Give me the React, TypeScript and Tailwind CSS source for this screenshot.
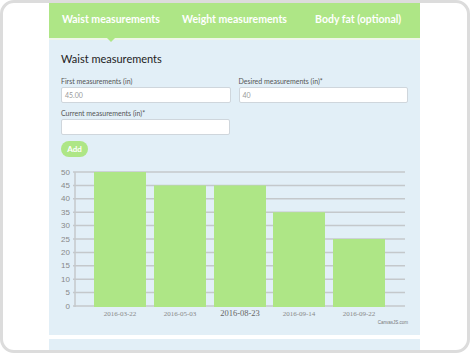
import React from "react";

const tabs = ["Waist measurements", "Weight measurements", "Body fat (optional)"];

const bars = [
  { label: "2016-03-22", value: 50 },
  { label: "2016-05-03", value: 45 },
  { label: "2016-08-23", value: 45, big: true },
  { label: "2016-09-14", value: 35 },
  { label: "2016-09-22", value: 25 },
];

function Field({ label, value }: { label: string; value?: string }) {
  return (
    <div className="flex flex-col">
      <span className="text-[7px] leading-[10px] text-[#555] mb-[1px]">{label}</span>
      <div className="h-[16px] bg-white border border-[#cfd6dc] rounded-[2px] flex items-center px-[3px] text-[7px] text-[#999]">
        {value}
      </div>
    </div>
  );
}

function Chart() {
  const top = 9;
  const bottom = 143;
  const step = (bottom - top) / 10;
  const xs = [45, 105, 165, 224, 284];
  return (
    <svg width="371" height="170" className="block">
      {Array.from({ length: 11 }).map((_, i) => {
        const y = top + i * step;
        return (
          <g key={i}>
            <line x1="24" x2="356" y1={y} y2={y} stroke="#c4c8cb" strokeWidth="1.5" />
            <text
              x="21"
              y={y + 2.5}
              textAnchor="end"
              fontSize="8"
              fill="#888"
              fontFamily="'Liberation Sans', sans-serif"
            >
              {50 - i * 5}
            </text>
          </g>
        );
      })}
      <line x1="26" x2="26" y1={top} y2={bottom + 1} stroke="#c4c8cb" strokeWidth="1.5" />
      {bars.map((b, i) => {
        const y = bottom - (b.value / 50) * (bottom - top);
        return (
          <g key={b.label}>
            <rect x={xs[i]} y={y} width="52" height={bottom - y + 1} fill="#aee686" />
            <text
              x={xs[i] + 26}
              y={b.big ? 153 : 152.5}
              textAnchor="middle"
              fontSize={b.big ? 8.5 : 7}
              fill={b.big ? "#666" : "#888"}
              fontFamily="'Liberation Serif', serif"
            >
              {b.label}
            </text>
          </g>
        );
      })}
      <text
        x="344"
        y="161"
        textAnchor="middle"
        fontSize="4.5"
        fill="#777"
        fontFamily="'Liberation Sans', sans-serif"
      >
        CanvasJS.com
      </text>
    </svg>
  );
}

export default function App() {
  return (
    <div
      className="w-[470px] h-[353px] bg-white border-[3px] border-[#dcdcdc] rounded-[14px] overflow-hidden"
      style={{ fontFamily: "Lato, sans-serif" }}
    >
      <div className="ml-[46px] w-[371px] h-full flex flex-col">
        <div className="relative h-[35px] bg-[#aee686] flex items-center shrink-0">
          {tabs.map((t) => (
            <div key={t} className="flex-1 text-center text-white font-bold text-[10.5px] pb-[1px]">
              {t}
            </div>
          ))}
          <div className="absolute left-[58px] top-[35px] w-0 h-0 border-l-[4px] border-r-[4px] border-t-[4px] border-l-transparent border-r-transparent border-t-[#aee686]" />
        </div>
        <div className="h-[2px] bg-[#eef6e8] shrink-0" />
        <div className="h-[295px] bg-[#e2eff7] shrink-0 flex flex-col">
          <div className="px-[12px] pt-[12px] flex flex-col items-start">
            <h2 className="text-[11px] leading-[14px] font-normal text-[#222]">Waist measurements</h2>
            <div className="grid grid-cols-2 gap-x-[8px] mt-[10px] w-[347px]">
              <Field label="First measurements (in)" value="45.00" />
              <Field label="Desired measurements (in)*" value="40" />
            </div>
            <div className="mt-[5px] w-[169px]">
              <Field label="Current measurements (in)*" />
            </div>
            <button className="mt-[6px] w-[27px] h-[16px] rounded-full bg-[#aee686] text-white text-[8px] font-bold leading-none">
              Add
            </button>
          </div>
          <div className="mt-[6px]">
            <Chart />
          </div>
        </div>
        <div className="h-[4px] bg-white shrink-0" />
        <div className="flex-1 bg-[#e2eff7]" />
      </div>
    </div>
  );
}
